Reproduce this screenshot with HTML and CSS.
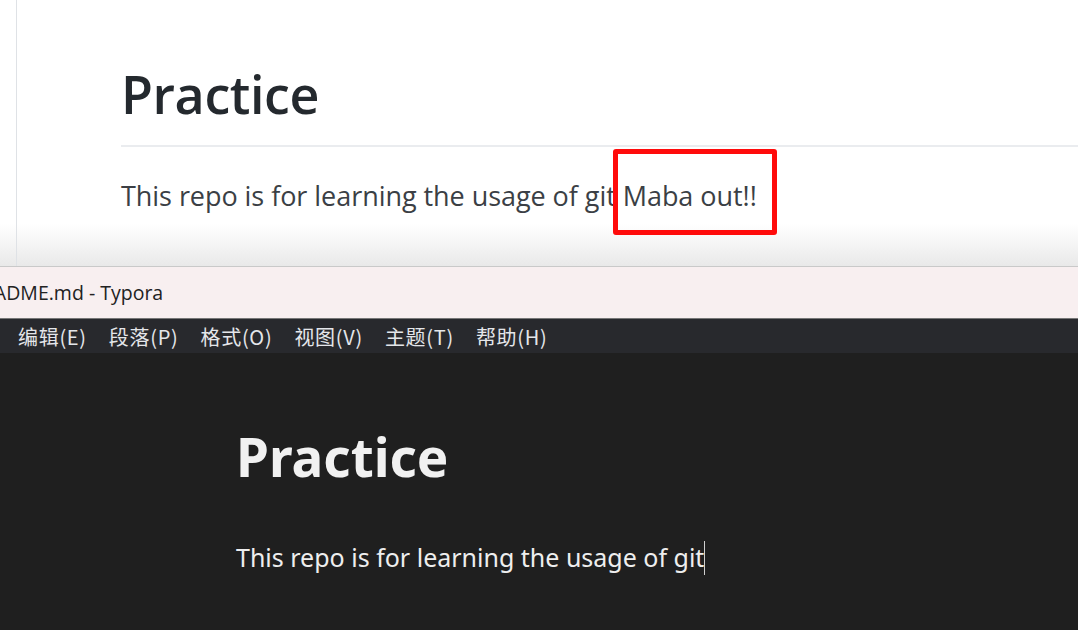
FILE: index.html
```html
<!DOCTYPE html>
<html lang="en">
<head>
<meta charset="utf-8">
<title>README.md - Typora</title>
<link rel="stylesheet" href="styles.css">
</head>
<body>
<section class="preview">
  <div class="preview-inner">
    <h1 class="preview-title">Practice</h1>
    <p class="preview-text">This repo is for learning the usage of git <span class="highlight">Maba out!!</span></p>
  </div>
  <div class="fade"></div>
</section>
<header class="titlebar"><span class="title-text">README.md - Typora</span></header>
<nav class="menubar">
  <span class="menu-item">编辑(E)</span>
  <span class="menu-item">段落(P)</span>
  <span class="menu-item">格式(O)</span>
  <span class="menu-item">视图(V)</span>
  <span class="menu-item">主题(T)</span>
  <span class="menu-item">帮助(H)</span>
</nav>
<main class="editor">
  <h1 class="editor-title">Practice</h1>
  <p class="editor-text">This repo is for learning the usage of git<span class="caret"></span></p>
</main>
</body>
</html>
```

FILE: styles.css
```css
*, *::before, *::after { box-sizing: border-box; }
html, body { margin: 0; padding: 0; }
body {
  width: 1078px;
  height: 630px;
  overflow: hidden;
  display: flex;
  flex-direction: column;
  background: #1f1f1f;
  font-family: "Open Sans", "Noto Sans", sans-serif;
}

.preview {
  position: relative;
  height: 267px;
  flex: none;
  background: #fff;
  border-bottom: 1px solid #c9c9c9;
  padding-left: 121px;
  padding-top: 56px;
}
.preview::before {
  content: "";
  position: absolute;
  left: 16px; top: 0; bottom: 0;
  width: 1px;
  background: #dfe2e6;
  z-index: 2;
}
.preview-inner { position: relative; z-index: 1; }
.fade {
  position: absolute;
  left: 0; right: 0; bottom: 0;
  height: 42px;
  background: linear-gradient(#ffffff, #e9e9e9);
}
.preview-title {
  margin: 0;
  font-size: 52px;
  font-weight: 600;
  line-height: 76px;
  color: #24292e;
  border-bottom: 2px solid #eaecef;
  padding-bottom: 13px;
  letter-spacing: -0.4px;
}
.preview-text {
  margin: 31px 0 0;
  font-size: 27px;
  line-height: 36px;
  color: #3b3f45;
  letter-spacing: -0.05px;
}
.highlight { position: relative; }
.highlight::after {
  content: "";
  position: absolute;
  left: -10px;
  top: -28px;
  width: 164px;
  height: 86px;
  border: 5px solid #ff0b0b;
  border-radius: 3px;
}

.titlebar {
  height: 52px;
  flex: none;
  background: #f8eff0;
  border-bottom: 1px solid #777;
  display: flex;
  align-items: center;
  overflow: hidden;
}
.title-text {
  font-size: 19.5px;
  color: #222;
  margin-left: -29px;
}

.menubar {
  height: 34px;
  flex: none;
  background: #28292d;
  display: flex;
  align-items: center;
  gap: 22px;
  padding-left: 18px;
}
.menu-item {
  font-family: "Noto Sans CJK SC", sans-serif;
  font-size: 20px;
  letter-spacing: 0.7px;
  color: #e4e6ea;
}

.editor {
  flex: 1;
  background: #1f1f1f;
  padding-left: 236px;
  padding-top: 66px;
  font-family: "Noto Sans", "Open Sans", sans-serif;
}
.editor-title {
  margin: 0;
  font-size: 53px;
  font-weight: 700;
  line-height: 76px;
  color: #f1f1f1;
}
.editor-text {
  margin: 44px 0 0;
  font-size: 25px;
  line-height: 36px;
  color: #eeeeee;
}
.caret {
  display: inline-block;
  width: 1px;
  height: 34px;
  background: #cfcfcf;
  vertical-align: -8px;
}
```
